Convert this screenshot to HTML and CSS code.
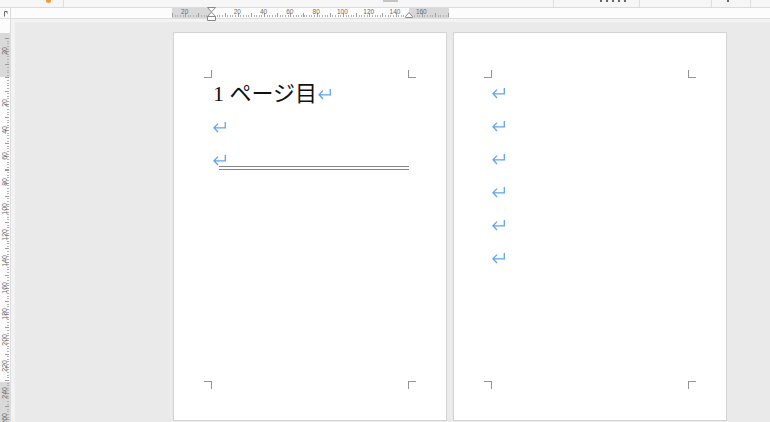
FILE: index.html
```html
<!DOCTYPE html>
<html lang="ja">
<head>
<meta charset="utf-8">
<title>ページ</title>
<link rel="stylesheet" href="styles.css">
</head>
<body>
<div class="ribbon">
  <span class="rb-dot"></span>
  <span class="rb-sep rb-s1"></span>
  <span class="rb-bar"></span>
  <span class="rb-sep rb-s2"></span>
  <span class="rb-ink rb-i1"></span>
  <span class="rb-sep rb-s3"></span>
  <span class="rb-sep rb-s4"></span>
  <span class="rb-ink rb-i2"></span>
  <span class="rb-sep rb-s5"></span>
</div>
<div class="ruler-row">
  <div class="tab-corner">
    <svg class="tab-icon" viewBox="0 0 10 10" width="10" height="10"><path d="M4.5 8.5 V3.5 H7.5" fill="none" stroke="#6a6a6a" stroke-width="1"/><path d="M6 4.5 h1.5 v1.5" fill="none" stroke="#9a9a9a" stroke-width="0.8"/></svg>
  </div>
  <div class="hruler">
    <div class="hscale">
      <span class="hl">20</span><span class="hl"></span><span class="hl">20</span><span class="hl">40</span><span class="hl">60</span><span class="hl">80</span><span class="hl">100</span><span class="hl">120</span><span class="hl">140</span><span class="hl">160</span>
      <svg class="indent-left" viewBox="0 0 9 15" width="9" height="15"><path d="M0.5 0.5 H8.5 L4.5 4.8 Z M4.5 5.2 L8.5 9.5 H0.5 Z M0.5 9.5 H8.5 V13.5 H0.5 Z" fill="#fbfbfb" stroke="#8a8a8a" stroke-width="1"/></svg>
      <svg class="indent-right" viewBox="0 0 8 6" width="8" height="6"><path d="M4 0.6 L7.5 4.5 V5.5 H0.5 V4.5 Z" fill="#fbfbfb" stroke="#8a8a8a" stroke-width="1"/></svg>
    </div>
  </div>
</div>
<div class="main">
  <div class="vruler">
    <div class="vscale">
      <div class="vlabels">
        <div class="vl"><span>20</span></div>
        <div class="vl"></div>
        <div class="vl"><span>20</span></div>
        <div class="vl"><span>40</span></div>
        <div class="vl"><span>60</span></div>
        <div class="vl"><span>80</span></div>
        <div class="vl"><span>100</span></div>
        <div class="vl"><span>120</span></div>
        <div class="vl"><span>140</span></div>
        <div class="vl"><span>160</span></div>
        <div class="vl"><span>180</span></div>
        <div class="vl"><span>200</span></div>
        <div class="vl"><span>220</span></div>
        <div class="vl"><span>240</span></div>
        <div class="vl"><span>260</span></div>
      </div>
    </div>
  </div>
  <div class="work">
    <div class="canvas">
      <div class="page page-one">
        <div class="area">
          <span class="crn tl"></span><span class="crn tr"></span><span class="crn bl"></span><span class="crn br"></span>
          <div class="para"><span class="txt">1 ページ目</span><svg class="ret" viewBox="0 0 14 11"><path d="M12.3 0 V5.8 H1.2 M5 1.6 L1 5.8 L5 10" fill="none" stroke="#5ea4f0" stroke-width="1.3"/></svg></div>
          <div class="para"><svg class="ret" viewBox="0 0 14 11"><path d="M12.3 0 V5.8 H1.2 M5 1.6 L1 5.8 L5 10" fill="none" stroke="#5ea4f0" stroke-width="1.3"/></svg></div>
          <div class="para para-ruled"><svg class="ret" viewBox="0 0 14 11"><path d="M12.3 0 V5.8 H1.2 M5 1.6 L1 5.8 L5 10" fill="none" stroke="#5ea4f0" stroke-width="1.3"/></svg></div>
          <div class="rule"></div>
        </div>
      </div>
      <div class="page page-two">
        <div class="area">
          <span class="crn tl"></span><span class="crn tr"></span><span class="crn bl"></span><span class="crn br"></span>
          <div class="para"><svg class="ret" viewBox="0 0 14 11"><path d="M12.3 0 V5.8 H1.2 M5 1.6 L1 5.8 L5 10" fill="none" stroke="#5ea4f0" stroke-width="1.3"/></svg></div>
          <div class="para"><svg class="ret" viewBox="0 0 14 11"><path d="M12.3 0 V5.8 H1.2 M5 1.6 L1 5.8 L5 10" fill="none" stroke="#5ea4f0" stroke-width="1.3"/></svg></div>
          <div class="para"><svg class="ret" viewBox="0 0 14 11"><path d="M12.3 0 V5.8 H1.2 M5 1.6 L1 5.8 L5 10" fill="none" stroke="#5ea4f0" stroke-width="1.3"/></svg></div>
          <div class="para"><svg class="ret" viewBox="0 0 14 11"><path d="M12.3 0 V5.8 H1.2 M5 1.6 L1 5.8 L5 10" fill="none" stroke="#5ea4f0" stroke-width="1.3"/></svg></div>
          <div class="para"><svg class="ret" viewBox="0 0 14 11"><path d="M12.3 0 V5.8 H1.2 M5 1.6 L1 5.8 L5 10" fill="none" stroke="#5ea4f0" stroke-width="1.3"/></svg></div>
          <div class="para"><svg class="ret" viewBox="0 0 14 11"><path d="M12.3 0 V5.8 H1.2 M5 1.6 L1 5.8 L5 10" fill="none" stroke="#5ea4f0" stroke-width="1.3"/></svg></div>
        </div>
      </div>
    </div>
  </div>
</div>
</body>
</html>
```

FILE: styles.css
```css
* {
  box-sizing: border-box;
}

html,
body {
  margin: 0;
}

body {
  width: 770px;
  height: 422px;
  overflow: hidden;
  background: #f3f3f3;
  font-family: "Liberation Sans", Arial, sans-serif;
  display: flex;
  flex-direction: column;
}

/* cut-off toolbar at the very top */
.ribbon {
  flex: none;
  height: 8px;
  background: #f6f6f6;
  border-bottom: 1px solid #dcdcdc;
  display: flex;
  align-items: flex-start;
  overflow: hidden;
}

.rb-dot {
  flex: none;
  width: 5px;
  height: 3px;
  margin-left: 46px;
  background: #f29a38;
  border-radius: 0 0 3px 3px;
}

.rb-sep {
  flex: none;
  width: 1px;
  height: 7px;
  background: #dedede;
}

.rb-s1 { margin-left: 12px; }
.rb-s2 { margin-left: 155px; }
.rb-s3 { margin-left: 11px; }
.rb-s4 { margin-left: 71px; }
.rb-s5 { margin-left: 17px; }

.rb-bar {
  flex: none;
  width: 15px;
  height: 2px;
  margin-left: 319px;
  background: #c4c4c4;
}

.rb-ink {
  flex: none;
  height: 2px;
  background: repeating-linear-gradient(to right, #666 0 2px, transparent 2px 6px);
}

.rb-i1 {
  width: 28px;
  margin-left: 46px;
}

.rb-i2 {
  width: 6px;
  margin-left: 15px;
}

/* horizontal ruler */
.ruler-row {
  flex: none;
  height: 11px;
  display: flex;
  background: #fcfcfc;
  border-bottom: 1px solid #dddddd;
}

.tab-corner {
  flex: none;
  width: 11px;
  border-right: 1px solid #dddddd;
}

.tab-icon {
  display: block;
}

.hruler {
  flex: 1;
  min-width: 0;
}

.hscale {
  position: relative;
  margin-left: 160.5px;
  width: 277px;
  height: 10px;
  display: flex;
  background-image:
    repeating-linear-gradient(to right, #9c9c9c 0 1px, transparent 1px 13.15px),
    repeating-linear-gradient(to right, #b3b3b3 0 1px, transparent 1px 2.63px),
    linear-gradient(to right, #d9d9d9 0 39.5px, #fdfdfd 39.5px 237.5px, #d9d9d9 237.5px 277px);
  background-size: 100% 4px, 100% 2px, 100% 100%;
  background-position: 0 5px, 0 7px, 0 0;
  background-repeat: no-repeat;
}

.hl {
  flex: none;
  width: 26.3px;
  text-align: center;
  font-size: 6.5px;
  line-height: 8px;
  color: #6a6a6a;
}

.indent-left {
  position: absolute;
  left: 35.5px;
  top: -1px;
}

.indent-right {
  position: absolute;
  left: 233.5px;
  top: 4px;
}

/* main area */
.main {
  flex: 1;
  min-height: 0;
  display: flex;
}

.vruler {
  flex: none;
  width: 11px;
  background: #fcfcfc;
  border-right: 1px solid #dddddd;
  overflow: hidden;
}

.vscale {
  margin-top: 14px;
  height: 389px;
  background: linear-gradient(to bottom, #d9d9d9 0 44px, #fdfdfd 44px 349px, #d9d9d9 349px 389px);
  overflow: hidden;
}

.vlabels {
  margin-top: 4.55px;
  display: flex;
  flex-direction: column;
  background-image:
    repeating-linear-gradient(to bottom, #9c9c9c 0 1px, transparent 1px 13.15px),
    repeating-linear-gradient(to bottom, #b3b3b3 0 1px, transparent 1px 2.63px);
  background-size: 4px 100%, 2px 100%;
  background-position: 5px 0, 7px 0;
  background-repeat: no-repeat;
}

.vl {
  flex: none;
  height: 26.3px;
  display: flex;
  align-items: center;
  justify-content: flex-start;
  padding-left: 1px;
}

.vl span {
  writing-mode: vertical-rl;
  transform: rotate(180deg);
  font-size: 7px;
  line-height: 7px;
  color: #666666;
}

.work {
  flex: 1;
  min-width: 0;
  padding: 3px 0 0 4px;
  background: #f3f3f3;
}

.canvas {
  height: 100%;
  background: #eaeaea;
  display: flex;
  align-items: flex-start;
  gap: 6px;
  padding: 10px 0 0 158px;
  overflow: hidden;
}

/* pages */
.page {
  flex: none;
  width: 274px;
  height: 389px;
  background: #ffffff;
  border: 1px solid #d4d4d4;
  padding: 44px 37px 38px 37px;
}

.area {
  position: relative;
  height: 100%;
}

.crn {
  position: absolute;
  width: 8px;
  height: 8px;
  border: 0 solid #959595;
}

.tl {
  left: -7px;
  top: -7px;
  border-right-width: 1px;
  border-bottom-width: 1px;
}

.tr {
  left: 197px;
  top: -7px;
  border-left-width: 1px;
  border-bottom-width: 1px;
}

.bl {
  left: -7px;
  top: 304px;
  border-right-width: 1px;
  border-top-width: 1px;
}

.br {
  left: 197px;
  top: 304px;
  border-left-width: 1px;
  border-top-width: 1px;
}

.para {
  height: 33px;
  display: flex;
  align-items: center;
}

.txt {
  font-family: "Liberation Serif", "Noto Sans CJK JP", serif;
  font-size: 22px;
  line-height: 33px;
  padding-left: 2px;
  color: #111111;
  white-space: pre;
}

.ret {
  flex: none;
  display: block;
  width: 14px;
  height: 11px;
}

.page-one .ret {
  margin-left: 2px;
  margin-top: 2px;
}

.page-one .txt + .ret {
  margin-left: 1px;
}

.page-two .ret {
  margin-left: 1px;
}

.page-one .para-ruled {
  height: 23px;
  align-items: flex-end;
}

.page-one .para-ruled .ret {
  margin-top: 0;
}

.rule {
  margin-left: 8px;
  height: 4px;
  border-top: 1px solid #858585;
  border-bottom: 1px solid #858585;
}
```
